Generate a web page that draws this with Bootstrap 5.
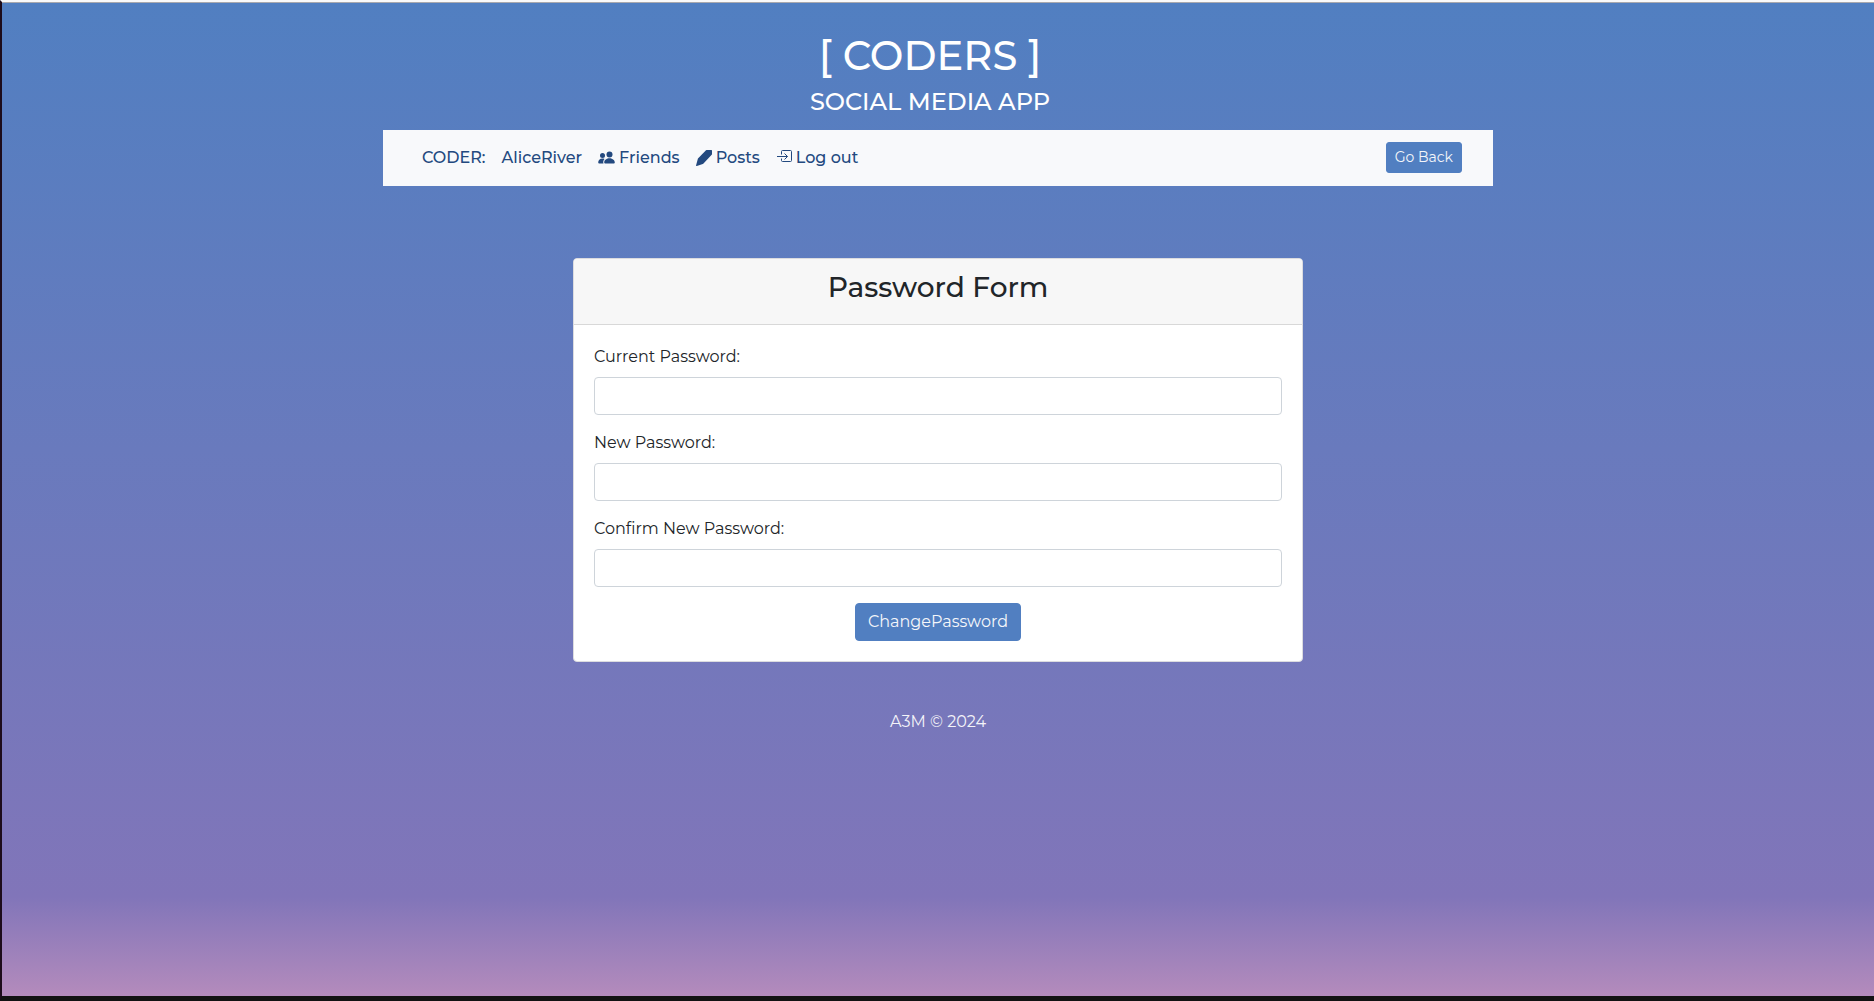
<!DOCTYPE html>
<html lang="en">
<head>
<meta charset="utf-8">
<meta name="viewport" content="width=device-width, initial-scale=1">
<title>Coders - Password Form</title>
<link href="https://cdn.jsdelivr.net/npm/bootstrap@5.3.0/dist/css/bootstrap.min.css" rel="stylesheet">
<style>
:root { --coder-blue: #517fc1; --coder-navy: #23497f; }
body {
  font-family: Montserrat, Inter, "Open Sans", sans-serif;
  font-weight: 400;
  color: #212529;
  background: #111;
}
.app-shell {
  border-top: 2px solid #fafafa;
  border-left: 2px solid #1d0c1b;
  border-bottom: 5px solid #121212;
  background: linear-gradient(180deg, #517fc1 0%, #8175b9 90%, #b48bbc 100%);
}
.app-top { border-top: 1px solid #a9a9ae; padding: 29px 16px 14px 0; }
.app-title { font-size: 40px; line-height: 47px; }
.app-tagline { font-size: 24px; line-height: 29px; }
.app-width { max-width: 1140px; padding-left: 15px; padding-right: 15px; }
.form-width { max-width: 730px; }
.app-nav { background: #f8f9fb; padding: 12px 31px 13px 39px; }
.app-nav a { color: var(--coder-navy); font-weight: 500; text-decoration: none; }
.icon-gap { gap: 4px; }
.btn-coder {
  --bs-btn-color: #f4f6fa; --bs-btn-bg: var(--coder-blue); --bs-btn-border-color: var(--coder-blue);
  --bs-btn-hover-color: #fff; --bs-btn-hover-bg: #23497f; --bs-btn-hover-border-color: #23497f;
  --bs-btn-border-radius: 4px;
}
.app-nav .btn-coder { --bs-btn-border-radius: 3px; }
.app-card { --bs-card-border-radius: 4px; --bs-card-inner-border-radius: 3px; --bs-card-border-color: #dcdcdf; margin-top: 72px; }
.app-card .card-header { background: #f7f7f7; padding: 12px 20px; border-bottom-color: #d8d8d8; }
.app-card .card-body { padding: 20px; }
.form-title { font-size: 28px; line-height: 33px; }
.app-card .form-control { border-color: #ced4da; border-radius: 4px; }
.app-foot { color: #f4f4f9; margin-top: 48px; }
</style>
</head>
<body>
<div class="app-shell min-vh-100">
  <header class="app-top text-center text-white">
    <h1 class="app-title mb-2">[ CODERS ]</h1>
    <h2 class="app-tagline mb-0">SOCIAL MEDIA APP</h2>
  </header>
  <div class="container-fluid app-width">
    <nav class="app-nav d-flex flex-wrap align-items-center justify-content-between" aria-label="Main">
      <div class="d-flex flex-wrap gap-3">
        <a href="#">CODER:</a>
        <a href="#">AliceRiver</a>
        <a href="#" class="d-flex align-items-center icon-gap">
          <svg width="17" height="16" viewBox="0 0 17 16" fill="currentColor" aria-hidden="true"><circle cx="4.5" cy="5.500" r="2.500"/><circle cx="11.500" cy="4.500" r="3"/><path d="M5.500 13.500H1.200q-1 0-1-1c0-2 1.500-4 4.300-4 .8 0 1.500.2 2 .4-1.200 1.200-1.600 3-1 4.600M7.200 13.500q-1 0-1-1c0-1.700 1.600-4.200 5.200-4.200s5.400 2.500 5.400 4.200q0 1-1 1z"/></svg>
          Friends</a>
        <a href="#" class="d-flex align-items-center icon-gap">
          <svg width="16" height="16" viewBox="0 0 16 16" fill="currentColor" aria-hidden="true"><path d="M10 .3q.3-.3.700-.3h4.700q.6 0 .6.600v3.400q0 .4-.3.800l-8.200 8.700q-.3.300-.7.500l-6 2q-.9.200-.7-.7l1.700-6.300q.1-.4.400-.7z"/></svg>
          Posts</a>
        <a href="#" class="d-flex align-items-center icon-gap">
          <svg width="16" height="16" viewBox="0 0 16 16" fill="none" stroke="currentColor" aria-hidden="true"><path d="M5.500 4.500v-3q0-1 1-1h8q1 0 1 1v9q0 1-1 1h-8q-1 0-1-1v-2M1 6.500h10.500M8.500 3.500l3 3-3 3"/></svg>
          Log out</a>
      </div>
      <button type="button" class="btn btn-sm btn-coder">Go Back</button>
    </nav>
    <main class="card app-card form-width mx-auto">
      <div class="card-header text-center">
        <h3 class="form-title mb-2">Password Form</h3>
      </div>
      <form class="card-body">
        <div class="mb-3">
          <label class="mb-2" for="current">Current Password:</label>
          <input class="form-control" type="password" id="current">
        </div>
        <div class="mb-3">
          <label class="mb-2" for="fresh">New Password:</label>
          <input class="form-control" type="password" id="fresh">
        </div>
        <div class="mb-3">
          <label class="mb-2" for="confirm">Confirm New Password:</label>
          <input class="form-control" type="password" id="confirm">
        </div>
        <div class="text-center">
          <button type="submit" class="btn btn-coder">ChangePassword</button>
        </div>
      </form>
    </main>
    <footer class="app-foot text-center">A3M © 2024</footer>
  </div>
</div>
<script src="https://cdn.jsdelivr.net/npm/bootstrap@5.3.0/dist/js/bootstrap.bundle.min.js"></script>
</body>
</html>
